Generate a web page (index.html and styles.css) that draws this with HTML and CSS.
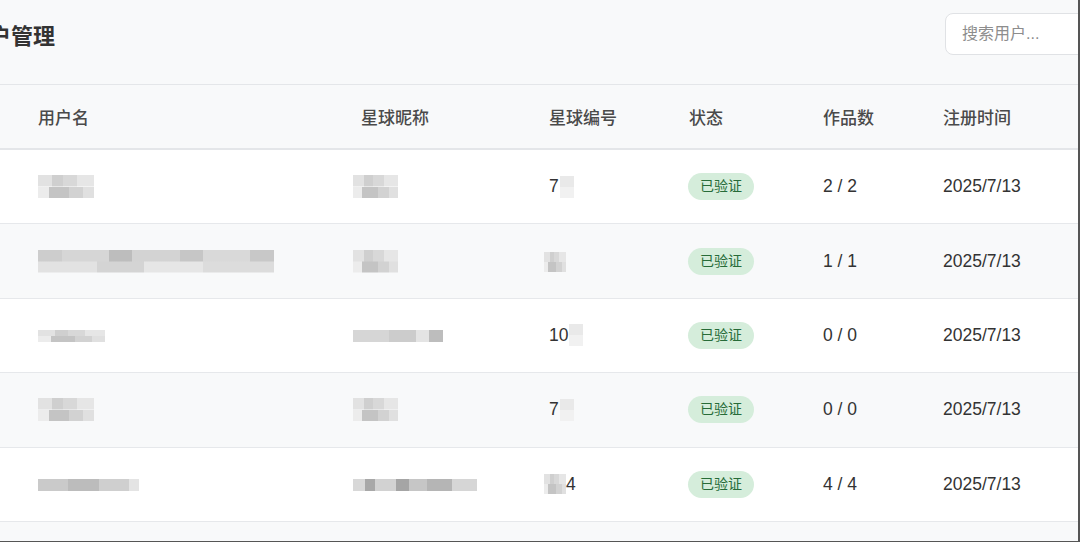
FILE: index.html
```html
<!DOCTYPE html>
<html lang="zh-CN">
<head>
    <meta charset="UTF-8">
    <meta name="viewport" content="width=device-width, initial-scale=1.0">
    <title>用户管理</title>
    <link rel="stylesheet" href="styles.css">
</head>
<body>
    <div class="frame">
        <div class="header">
            <h1>用户管理</h1>
            <input type="text" class="search" placeholder="搜索用户...">
        </div>

        <div class="table">
            <div class="row head">
                <div>用户名</div>
                <div>星球昵称</div>
                <div>星球编号</div>
                <div>状态</div>
                <div>作品数</div>
                <div>注册时间</div>
            </div>

            <div class="row">
                <div><span class="mosaic m-short"></span></div>
                <div><span class="mosaic m-nick shift"></span></div>
                <div class="num">7<span class="mosaic m-light"></span></div>
                <div><span class="badge">已验证</span></div>
                <div>2 / 2</div>
                <div>2025/7/13</div>
            </div>

            <div class="row">
                <div><span class="mosaic m-long"></span></div>
                <div><span class="mosaic m-nick shift"></span></div>
                <div><span class="mosaic m-tiny shift-sm"></span></div>
                <div><span class="badge">已验证</span></div>
                <div>1 / 1</div>
                <div>2025/7/13</div>
            </div>

            <div class="row">
                <div><span class="mosaic m-mid"></span></div>
                <div><span class="mosaic m-nick-wide shift"></span></div>
                <div class="num">10<span class="mosaic m-light"></span></div>
                <div><span class="badge">已验证</span></div>
                <div>0 / 0</div>
                <div>2025/7/13</div>
            </div>

            <div class="row">
                <div><span class="mosaic m-short"></span></div>
                <div><span class="mosaic m-nick shift"></span></div>
                <div class="num">7<span class="mosaic m-light"></span></div>
                <div><span class="badge">已验证</span></div>
                <div>0 / 0</div>
                <div>2025/7/13</div>
            </div>

            <div class="row">
                <div><span class="mosaic m-thin"></span></div>
                <div><span class="mosaic m-nick-long shift"></span></div>
                <div class="num"><span class="mosaic m-tiny shift-sm"></span>4</div>
                <div><span class="badge">已验证</span></div>
                <div>4 / 4</div>
                <div>2025/7/13</div>
            </div>
        </div>
    </div>
</body>
</html>
```

FILE: styles.css
```css
body {
    margin: 0;
    font-family: "Liberation Sans", "Noto Sans CJK SC", sans-serif;
    color: #333;
}

.frame {
    width: 1080px;
    height: 542px;
    box-sizing: border-box;
    border-right: 2px solid #555;
    border-bottom: 1px solid #555;
    background: #f8f9fa;
    overflow: hidden;
}

.header {
    height: 85px;
    box-sizing: border-box;
    padding-bottom: 17px;
    border-bottom: 1px solid #e4e6e9;
    display: flex;
    align-items: center;
    justify-content: space-between;
}

.header h1 {
    margin: 0 0 0 -33px;
    font-size: 22px;
    font-weight: 700;
    color: #333;
}

.search {
    width: 200px;
    height: 42px;
    box-sizing: border-box;
    margin-right: -67px;
    padding: 0 16px;
    border: 1px solid #e0e2e5;
    border-radius: 8px;
    background: white;
    font-family: inherit;
    font-size: 16px;
    outline: none;
}

.search::placeholder {
    color: #8d8d8d;
}

.row {
    display: grid;
    grid-template-columns: 323px 188px 140px 134px 120px 1fr;
    align-items: center;
    padding-left: 38px;
    height: 74.4px;
    box-sizing: border-box;
    border-bottom: 1px solid #e6e8eb;
    font-size: 17.5px;
    background: white;
}

.row:nth-child(odd) {
    background: #f8f9fa;
}

.row.head {
    height: 65px;
    border-bottom: 2px solid #e4e6e9;
    background: #f8f9fa;
    font-size: 17px;
    font-weight: 500;
    color: #4a4a4a;
}

.num {
    display: flex;
    align-items: center;
}

.badge {
    display: inline-block;
    padding: 4px 12px;
    border-radius: 14px;
    background: #d5eddb;
    color: #276b38;
    font-size: 14px;
    line-height: 19px;
    margin-left: -1px;
}

.mosaic {
    display: inline-block;
    vertical-align: middle;
    height: 23px;
    background:
        linear-gradient(90deg, #e2e2e2 0 25%, #cfcfcf 25% 45%, #d8d8d8 45% 70%, #e6e6e6 70% 100%) top / 100% 50% no-repeat,
        linear-gradient(90deg, #ececec 0 20%, #c4c4c4 20% 55%, #d2d2d2 55% 80%, #e0e0e0 80% 100%) bottom / 100% 50% no-repeat;
}

.shift {
    margin-left: -8px;
}

.shift-sm {
    margin-left: -5px;
}

.m-short {
    width: 56px;
}

.m-mid {
    width: 67px;
    height: 12px;
}

.m-long {
    width: 236px;
    background:
        linear-gradient(90deg, #cdcdcd 0 10%, #d6d6d6 10% 30%, #bdbdbd 30% 40%, #d3d3d3 40% 60%, #c6c6c6 60% 70%, #d9d9d9 70% 90%, #c8c8c8 90% 100%) top / 100% 50% no-repeat,
        linear-gradient(90deg, #e2e2e2 0 25%, #d4d4d4 25% 45%, #e6e6e6 45% 70%, #dcdcdc 70% 100%) bottom / 100% 50% no-repeat;
}

.m-thin {
    width: 101px;
    height: 12px;
    background: linear-gradient(90deg, #cacaca 0 30%, #bcbcbc 30% 60%, #cfcfcf 60% 90%, #e4e4e4 90% 100%);
}

.m-nick {
    width: 45px;
}

.m-nick-wide {
    width: 90px;
    height: 12px;
    background: linear-gradient(90deg, #d6d6d6 0 40%, #cccccc 40% 70%, #e4e4e4 70% 85%, #bdbdbd 85% 100%);
}

.m-nick-long {
    width: 124px;
    height: 12px;
    background: linear-gradient(90deg, #d8d8d8 0 10%, #a8a8a8 10% 18%, #d2d2d2 18% 35%, #a5a5a5 35% 45%, #c6c6c6 45% 60%, #b5b5b5 60% 80%, #d6d6d6 80% 100%);
}

.m-tiny {
    width: 22px;
    height: 20px;
}

.m-light {
    width: 14px;
    height: 22px;
    margin-left: 1px;
    background: linear-gradient(180deg, #e9e9e9 0 50%, #f1f1f1 50% 100%);
}
```
